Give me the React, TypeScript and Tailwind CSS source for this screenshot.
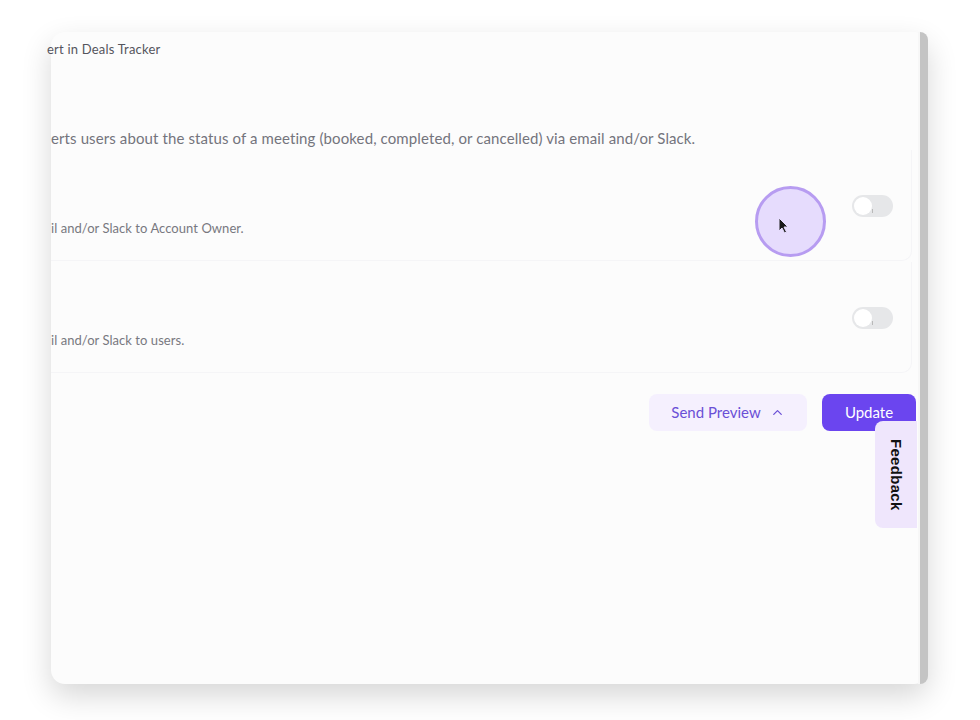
import React from "react";
import { ChevronUp } from "lucide-react";

function Toggle() {
  return (
    <div className="relative w-[41px] h-[22px] rounded-full bg-[#e6e7e9]">
      <div className="absolute left-[2px] top-[2px] w-[18px] h-[18px] rounded-full bg-white" />
      <div className="absolute left-[20px] top-[14px] w-[1px] h-[4px] bg-[#b9b9b9]" />
    </div>
  );
}

function Row({ text }: { text: string }) {
  return (
    <div className="h-[111px] flex items-start rounded-br-[10px] border-b border-r border-[#f5f5f7] bg-[#fcfcfc] mr-[6px]">
      <div className="flex-1 pt-[69px] text-[13px] leading-[18px] text-[#78787f] tracking-[0.05px]">{text}</div>
      <div className="mt-[45px] mr-[18px]">
        <Toggle />
      </div>
    </div>
  );
}

export default function App() {
  return (
    <div
      className="w-[980px] h-[720px] bg-white relative overflow-hidden"
      style={{ fontFamily: "Lato, 'Noto Sans', sans-serif" }}
    >
      <div className="pt-[32px] pl-[51px]">
        <div className="w-[877px] h-[652px] rounded-[14px] bg-[#fcfcfc] shadow-[0_12px_30px_rgba(0,0,0,0.16)] flex">
          <div className="w-[867px] flex flex-col">
            <div className="pt-[8px] -ml-[4px] text-[13px] leading-[18px] text-[#55555d] tracking-[0.2px]">
              ert in Deals Tracker
            </div>
            <div className="mt-[69px] text-[15px] leading-[22px] text-[#74747c] whitespace-nowrap tracking-[0.11px]">
              erts users about the status of a meeting (booked, completed, or cancelled) via email and/or Slack.
            </div>
            <div className="mt-[1px]">
              <Row text="il and/or Slack to Account Owner." />
              <div className="h-[1px]" />
              <Row text="il and/or Slack to users." />
            </div>
            <div className="mt-[21px] flex justify-end gap-[15px] mr-[2px]">
              <div className="w-[158px] h-[37px] rounded-[8px] bg-[#f5f0fe] flex items-center justify-center gap-[9px] text-[15px] text-[#6a4fd6]">
                <span>Send Preview</span>
                <ChevronUp size={15} strokeWidth={2} />
              </div>
              <div className="w-[94px] h-[37px] rounded-[8px] bg-[#6b45ef] flex items-center justify-center text-[15px] text-white">
                Update
              </div>
            </div>
          </div>
          <div className="w-[2px] bg-[#f7f7f7]" />
          <div className="w-[8px] bg-[#c4c4c4] rounded-tr-[12px] rounded-br-[12px]" />
        </div>
      </div>

      {/* Feedback tab */}
      <div className="absolute left-[875px] top-[421px] w-[42px] h-[107px] rounded-l-[8px] bg-[#efe6fc] flex items-center justify-center">
        <span
          className="[writing-mode:vertical-rl] text-[15px] font-bold text-[#111] tracking-[0.3px]"
          style={{ fontFamily: "'Liberation Sans', Arial, sans-serif" }}
        >
          Feedback
        </span>
      </div>

      {/* cursor highlight */}
      <div className="absolute left-[755px] top-[186px] w-[71px] h-[71px] rounded-full bg-[#e6dcfd] border-[3px] border-[#b79cf1]" />
      <svg className="absolute left-[777px] top-[217px]" width="14" height="18" viewBox="0 0 14 18">
        <path d="M2 1 L2 14 L5 11 L7.5 16 L9.5 15 L7 10 L11 10 Z" fill="#1a1a1a" stroke="#e6dcfd" strokeWidth="1" />
      </svg>
    </div>
  );
}
